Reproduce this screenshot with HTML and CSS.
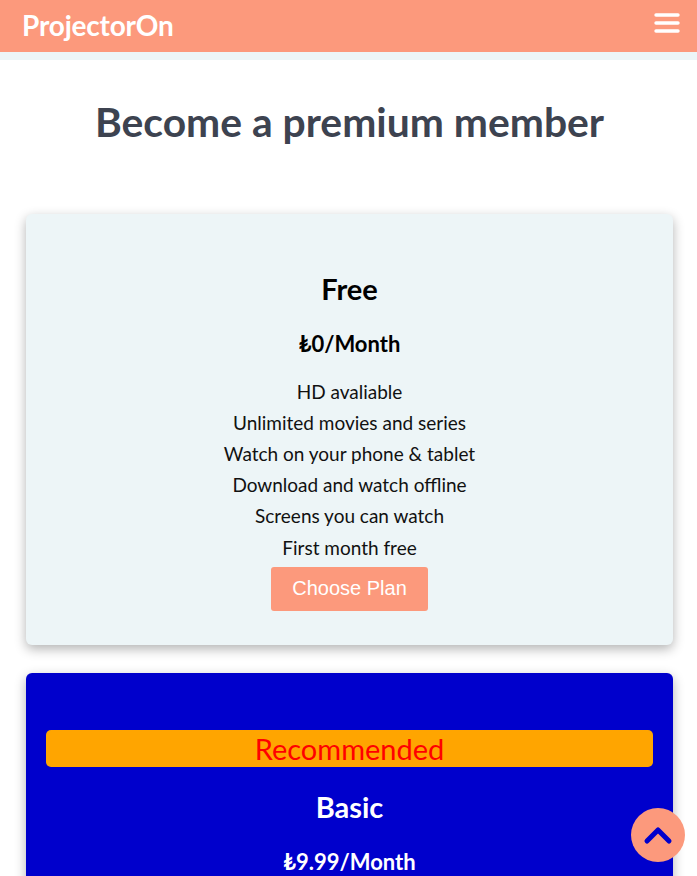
FILE: index.html
```html
<!DOCTYPE html>
<html lang="en">
<head>
<meta charset="utf-8">
<title>ProjectorOn</title>
<link rel="stylesheet" href="styles.css">
</head>
<body>
<header class="topbar">
  <div class="logo">ProjectorOn</div>
  <button class="menu" aria-label="Menu">
    <svg width="26" height="22" viewBox="0 0 26 22"><g stroke="#fff" stroke-width="3.4" stroke-linecap="round"><line x1="2" y1="3" x2="24" y2="3"/><line x1="2" y1="11" x2="24" y2="11"/><line x1="2" y1="19" x2="24" y2="19"/></g></svg>
  </button>
</header>
<div class="strip"></div>
<main class="content">
  <h1 class="title">Become a premium member</h1>
  <section class="plans">
    <div class="plan plan-free">
      <h2 class="plan-name">Free</h2>
      <h3 class="plan-price">₺0/Month</h3>
      <ul class="features">
        <li>HD avaliable</li>
        <li>Unlimited movies and series</li>
        <li>Watch on your phone &amp; tablet</li>
        <li>Download and watch offline</li>
        <li>Screens you can watch</li>
        <li>First month free</li>
      </ul>
      <button class="choose">Choose Plan</button>
    </div>
    <div class="plan plan-basic">
      <div class="badge">Recommended</div>
      <h2 class="plan-name">Basic</h2>
      <h3 class="plan-price">₺9.99/Month</h3>
    </div>
  </section>
</main>
<button class="to-top" aria-label="Back to top">
  <svg width="30" height="20" viewBox="0 0 30 20"><polyline points="4,16 15,5 26,16" fill="none" stroke="#0000cc" stroke-width="5" stroke-linecap="round" stroke-linejoin="round"/></svg>
</button>
</body>
</html>
```
FILE: styles.css
```css
* { box-sizing: border-box; }
html, body { margin: 0; padding: 0; }
body {
  font-family: Lato, "DejaVu Sans", sans-serif;
  background: #fff;
  color: #000;
  overflow: hidden;
  height: 876px;
}
.topbar {
  height: 52px;
  background: #fc997c;
  display: flex;
  align-items: center;
  justify-content: space-between;
  padding: 0 17px 0 22px;
}
.logo {
  color: #fff;
  font-weight: 700;
  font-size: 28px;
  letter-spacing: -0.2px;
  margin-top: -3px;
}
.menu {
  background: none;
  border: 0;
  padding: 0;
  display: flex;
  margin-top: -6px;
}
.strip {
  height: 8px;
  background: #edf5f7;
}
.content {
  padding: 0 24px 0 26px;
}
.title {
  margin: 37px 0 0;
  text-align: center;
  font-size: 40.8px;
  font-weight: 700;
  color: #3d4350;
  line-height: 50px;
}
.plans {
  margin-top: 67px;
  display: flex;
  flex-direction: column;
  gap: 28px;
}
.plan {
  border-radius: 6px;
  box-shadow: 0 4px 12px rgba(0,0,0,0.3);
  text-align: center;
  display: flex;
  flex-direction: column;
  align-items: center;
}
.plan-free {
  background: #edf5f7;
  padding: 57px 20px 34px;
}
.plan-basic {
  background: #0000cc;
  color: #fff;
  padding: 57px 20px 20px;
  height: 260px;
}
.plan-name {
  margin: 0;
  font-size: 29px;
  line-height: 36px;
  font-weight: 700;
}
.plan-price {
  margin: 23px 0 0;
  font-size: 22px;
  line-height: 28px;
  font-weight: 700;
}
.features {
  list-style: none;
  margin: 17.5px 0 0;
  padding: 0;
  font-size: 19px;
  line-height: 31.2px;
  color: #111;
}
.choose {
  margin-top: 4px;
  background: #fc997c;
  color: #fff;
  border: 0;
  border-radius: 3px;
  font-family: "Liberation Sans", Arial, sans-serif;
  font-size: 20px;
  height: 44px;
  width: 157px;
  padding: 0;
}
.badge {
  align-self: stretch;
  background: #ffa500;
  color: #ff0000;
  border-radius: 5px;
  font-size: 29px;
  line-height: 37px;
  height: 37px;
  margin-bottom: 22px;
}
.plan-basic .plan-price { margin-top: 23px; }
.to-top {
  position: fixed;
  left: 631px;
  top: 808px;
  width: 54px;
  height: 54px;
  border-radius: 50%;
  border: 0;
  background: #fc997c;
  display: flex;
  align-items: center;
  justify-content: center;
  padding: 0;
}
```
